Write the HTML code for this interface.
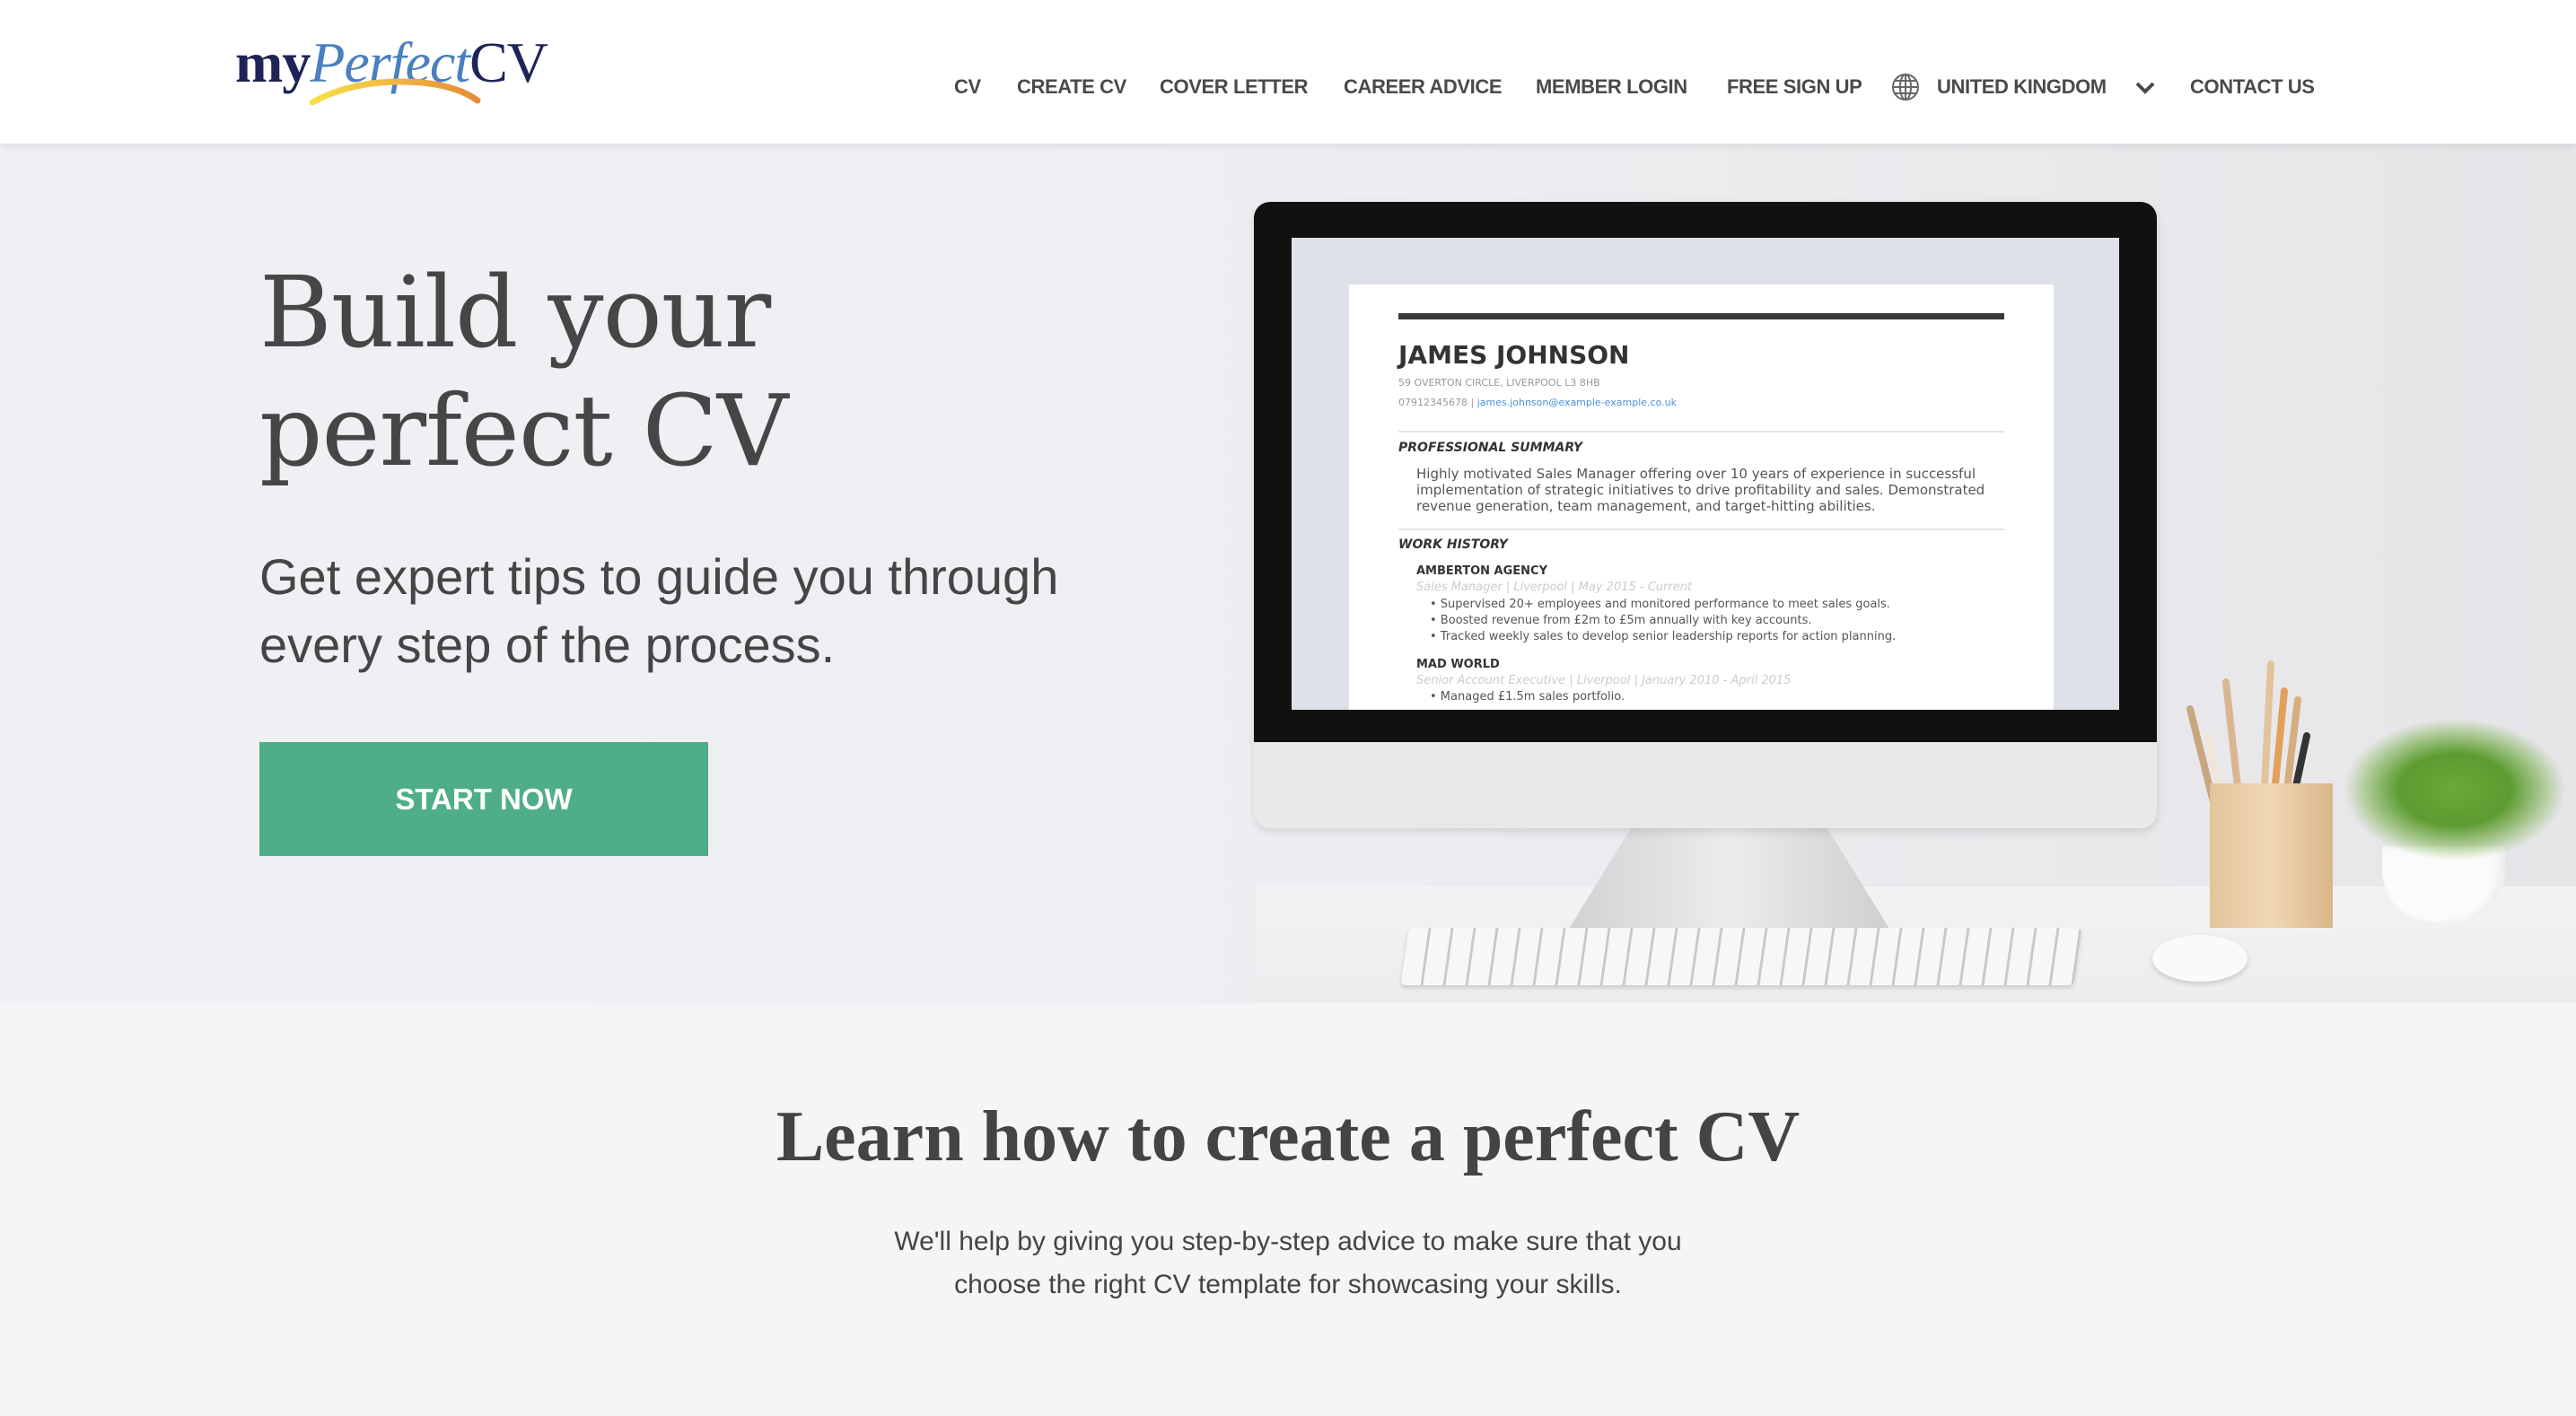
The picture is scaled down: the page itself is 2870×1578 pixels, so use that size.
<!DOCTYPE html>
<html><head><meta charset="utf-8"><style>
*{margin:0;padding:0;box-sizing:border-box}
body{width:2870px;height:1578px;overflow:hidden;background:#f5f5f7;font-family:"Liberation Sans",sans-serif;position:relative;color:#454545}
.a{position:absolute}
header{position:absolute;left:0;top:0;width:2870px;height:160px;background:#fff;box-shadow:0 3px 8px rgba(0,0,0,.08);z-index:5}
.nav{position:absolute;top:84px;font-weight:bold;font-size:22px;color:#4a4a4d;white-space:nowrap;letter-spacing:-.4px}
.hero{position:absolute;left:0;top:160px;width:2870px;height:958px;background:linear-gradient(90deg,#eff0f4 0%,#eeeff3 45%,#ebebee 70%,#e6e6e9 100%)}
.serif{font-family:"DejaVu Serif","Liberation Serif",serif}
.cv{font-family:"DejaVu Sans","Liberation Sans",sans-serif;position:absolute;white-space:nowrap;color:#555}
</style></head><body>
<header>
<div class="a" style="left:262px;top:30px;font-family:'Liberation Serif',serif;font-size:64px;line-height:80px;white-space:nowrap;letter-spacing:-1px">
<span style="color:#1e2456;font-weight:bold">my</span><span style="color:#4a7fc0;font-style:italic">Perfect</span><span style="color:#1e2456">CV</span></div>
<svg class="a" style="left:340px;top:86px" width="200" height="32"><path d="M8 28 Q60 0 130 6 Q170 10 192 26" stroke="url(#g)" stroke-width="7" fill="none" stroke-linecap="round"/><defs><linearGradient id="g"><stop offset="0" stop-color="#f7e14a"/><stop offset="1" stop-color="#e88a3a"/></linearGradient></defs></svg>
<div class="nav" style="left:1063px">CV</div>
<div class="nav" style="left:1133px">CREATE CV</div>
<div class="nav" style="left:1292px">COVER LETTER</div>
<div class="nav" style="left:1497px">CAREER ADVICE</div>
<div class="nav" style="left:1711px">MEMBER LOGIN</div>
<div class="nav" style="left:1924px">FREE SIGN UP</div>
<svg class="a" style="left:2107px;top:81px" width="32" height="32" viewBox="0 0 32 32" fill="none" stroke="#666" stroke-width="2"><circle cx="16" cy="16" r="14"/><ellipse cx="16" cy="16" rx="6" ry="14"/><path d="M2 16h28M4 9h24M4 23h24M16 2v28"/></svg>
<div class="nav" style="left:2158px">UNITED KINGDOM</div>
<svg class="a" style="left:2378px;top:90px" width="24" height="16"><path d="M3 3l9 9 9-9" stroke="#4a4a4d" stroke-width="4" fill="none"/></svg>
<div class="nav" style="left:2440px">CONTACT US</div>
</header>
<div class="hero">
<div class="a" style="left:1400px;top:828px;width:1470px;height:130px;background:linear-gradient(#f3f3f4,#ededee)"></div>
<div class="a" style="left:1748px;top:759px;width:357px;height:116px;background:linear-gradient(90deg,#d2d2d4,#ececee,#cfcfd1);clip-path:polygon(20% 0,80% 0,100% 100%,0 100%)"></div>
<div class="a" style="left:1397px;top:65px;width:1006px;height:698px;background:#e9e9ea;border-radius:18px;box-shadow:0 4px 10px rgba(0,0,0,.12)"></div>
<div class="a" style="left:1397px;top:65px;width:1006px;height:602px;background:#111;border-radius:18px 18px 0 0"></div>
<div class="a" style="left:1439px;top:105px;width:922px;height:526px;background:#dfe1e8;overflow:hidden">
 <div class="a" style="left:64px;top:52px;width:785px;height:500px;background:#fff">
  <div class="a" style="left:55px;top:32px;width:675px;height:7px;background:#3a3a3a"></div>
  <div class="cv" style="left:55px;top:62px;font-size:28px;font-weight:bold;color:#333">JAMES JOHNSON</div>
  <div class="cv" style="left:55px;top:103px;font-size:11px;color:#999">59 OVERTON CIRCLE, LIVERPOOL L3 8HB</div>
  <div class="cv" style="left:55px;top:125px;font-size:11px;color:#999">07912345678 | <span style="color:#4a90d9">james.johnson@example-example.co.uk</span></div>
  <div class="a" style="left:55px;top:163px;width:675px;height:2px;background:#e3e3e8"></div>
  <div class="cv" style="left:55px;top:174px;font-size:14px;font-weight:bold;font-style:italic;color:#333">PROFESSIONAL SUMMARY</div>
  <div class="cv" style="left:75px;top:202px;font-size:15px;line-height:18px">Highly motivated Sales Manager offering over 10 years of experience in successful<br>implementation of strategic initiatives to drive profitability and sales. Demonstrated<br>revenue generation, team management, and target-hitting abilities.</div>
  <div class="a" style="left:55px;top:272px;width:675px;height:2px;background:#e3e3e8"></div>
  <div class="cv" style="left:55px;top:282px;font-size:14px;font-weight:bold;font-style:italic;color:#333">WORK HISTORY</div>
  <div class="cv" style="left:75px;top:312px;font-size:13px;font-weight:bold;color:#333">AMBERTON AGENCY</div>
  <div class="cv" style="left:75px;top:330px;font-size:13px;color:#ccc;font-style:italic">Sales Manager | Liverpool | May 2015 - Current</div>
  <div class="cv" style="left:90px;top:348px;font-size:13px;line-height:18px">• Supervised 20+ employees and monitored performance to meet sales goals.<br>• Boosted revenue from £2m to £5m annually with key accounts.<br>• Tracked weekly sales to develop senior leadership reports for action planning.</div>
  <div class="cv" style="left:75px;top:416px;font-size:13px;font-weight:bold;color:#333">MAD WORLD</div>
  <div class="cv" style="left:75px;top:434px;font-size:13px;color:#ccc;font-style:italic">Senior Account Executive | Liverpool | January 2010 - April 2015</div>
  <div class="cv" style="left:90px;top:452px;font-size:13px">• Managed £1.5m sales portfolio.</div>
 </div>
</div>
<div class="a" style="left:1565px;top:874px;width:750px;height:64px;background:repeating-linear-gradient(90deg,#f7f7f8 0 22px,#c8c9cc 22px 25px),#eee;border-radius:6px;box-shadow:0 3px 5px rgba(0,0,0,.15);transform:skewX(-8deg)"></div>
<div class="a" style="left:2398px;top:882px;width:106px;height:52px;background:#fafafa;border-radius:50%;box-shadow:0 3px 6px rgba(0,0,0,.15)"></div>
<svg class="a" style="left:2420px;top:540px" width="160" height="340"><g stroke-width="8" stroke-linecap="round"><path d="M80 330 L20 90" stroke="#c9a77e"/><path d="M90 330 L60 60" stroke="#d9b690"/><path d="M95 330 L110 40" stroke="#e3c39b"/><path d="M100 330 L125 70" stroke="#e2a05a"/><path d="M105 330 L150 120" stroke="#333"/><path d="M85 330 L40 120" stroke="#f0e6d8"/><path d="M110 330 L140 80" stroke="#d6ad7c"/></g></svg>
<div class="a" style="left:2462px;top:713px;width:137px;height:161px;background:linear-gradient(90deg,#e2c49c,#f0d7b4,#d9b68a)"></div>
<div class="a" style="left:2654px;top:783px;width:137px;height:86px;background:#fbfbfb;border-radius:0 0 60px 60px;box-shadow:inset -8px 0 10px rgba(0,0,0,.06)"></div>
<div class="a" style="left:2610px;top:640px;width:250px;height:160px;background:radial-gradient(ellipse at 50% 50%,#6aa93a 0,#5c9c30 35%,rgba(110,170,60,.5) 55%,transparent 70%)"></div>
<div class="a serif" style="left:289px;top:122px;font-size:110px;line-height:132px;color:#464646;white-space:nowrap;letter-spacing:-1px">Build your<br>perfect CV</div>
<div class="a" style="left:289px;top:445px;font-size:56px;line-height:76px;color:#454545;white-space:nowrap">Get expert tips to guide you through<br>every step of the process.</div>
<div class="a" style="left:289px;top:667px;width:500px;height:127px;background:#4fae89;color:#fff;font-weight:bold;font-size:33px;line-height:127px;text-align:center">START NOW</div>
</div>
<div class="a" style="left:0;top:1222px;width:2870px;text-align:center;font-family:'Liberation Serif',serif;font-size:80px;font-weight:bold;color:#444">Learn how to create a perfect CV</div>
<div class="a" style="left:0;top:1360px;width:2870px;text-align:center;font-size:30px;line-height:48px;color:#444">We'll help by giving you step-by-step advice to make sure that you<br>choose the right CV template for showcasing your skills.</div>
</body></html>
